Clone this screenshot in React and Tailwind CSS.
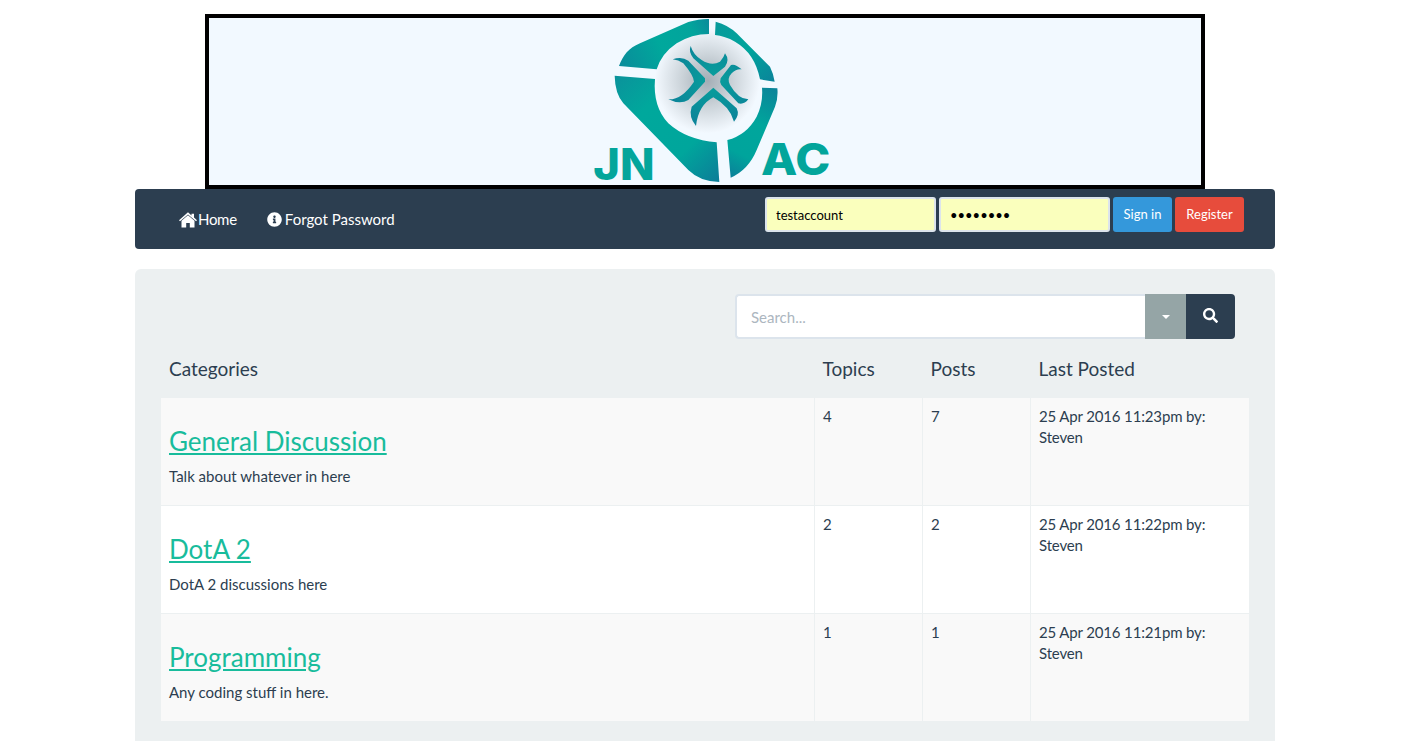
import React from "react";
import { FaInfoCircle, FaSearch } from "react-icons/fa";

function HomeIcon() {
  return (
    <svg width="18" height="16" viewBox="0 0 18 16" fill="currentColor" className="mb-[1px] shrink-0">
      <path d="M9 0.3 L12.5 3.4 V1.8 H15 V5.6 L18 8.3 L17 9.2 L9 2.4 L1 9.2 L0 8.3 Z" />
      <path d="M9 3.2 L15.5 8.8 V15.6 H10.8 V11 H7.2 V15.6 H2.5 V8.8 Z" />
    </svg>
  );
}

function Logo() {
  return (
    <svg width="300" height="167" viewBox="0 24 900 501" className="block shrink-0 overflow-visible">
      <defs>
        <linearGradient id="a" gradientUnits="userSpaceOnUse" x1="180" y1="170" x2="450" y2="30">
          <stop offset="0" stopColor="#0a8c9a" />
          <stop offset="0.45" stopColor="#00a89c" />
          <stop offset="0.8" stopColor="#02a49c" />
          <stop offset="1" stopColor="#0b8a9a" />
        </linearGradient>
        <linearGradient id="b" gradientUnits="userSpaceOnUse" x1="470" y1="40" x2="640" y2="215">
          <stop offset="0" stopColor="#079a9b" />
          <stop offset="0.5" stopColor="#00a59c" />
          <stop offset="1" stopColor="#0b849a" />
        </linearGradient>
        <linearGradient id="c" gradientUnits="userSpaceOnUse" x1="170" y1="200" x2="470" y2="510">
          <stop offset="0" stopColor="#0a939b" />
          <stop offset="0.3" stopColor="#00a89c" />
          <stop offset="0.7" stopColor="#00a69c" />
          <stop offset="1" stopColor="#0b7f98" />
        </linearGradient>
        <linearGradient id="d" gradientUnits="userSpaceOnUse" x1="650" y1="235" x2="510" y2="500">
          <stop offset="0" stopColor="#0b8399" />
          <stop offset="0.4" stopColor="#00a69c" />
          <stop offset="0.75" stopColor="#00a49c" />
          <stop offset="1" stopColor="#0b8099" />
        </linearGradient>
        <radialGradient id="x" gradientUnits="userSpaceOnUse" cx="458" cy="215" r="135">
          <stop offset="0" stopColor="#08a09c" />
          <stop offset="1" stopColor="#0b8499" />
        </radialGradient>
        <radialGradient id="g" gradientUnits="userSpaceOnUse" cx="442" cy="212" r="158">
          <stop offset="0" stopColor="#a3adb5" />
          <stop offset="0.5" stopColor="#ccd4da" />
          <stop offset="1" stopColor="#f3f9ff" />
        </radialGradient>
      </defs>
      <circle cx="442" cy="212" r="158" fill="url(#g)" />
      <path fill="url(#a)" d="M177 168 C190 135 205 115 240 100 L385 36 Q420 26 447 27 L447 72 Q395 72 350 100 Q305 130 290 178 Z" />
      <path fill="url(#b)" d="M467 35 Q505 45 530 70 L630 170 Q640 190 644 215 L600 208 Q585 130 525 95 Q495 78 465 75 Z" />
      <path fill="url(#c)" d="M164 197 L285 207 Q278 290 325 340 Q380 390 470 397 L478 516 Q420 515 385 480 L190 280 Q165 250 164 197 Z" />
      <path fill="url(#d)" d="M606 233 L652 235 Q655 265 645 290 L590 420 Q565 480 512 503 L502 390 Q560 375 590 320 Q610 280 606 233 Z" />
      <path fill="url(#x)" d="M392 108 Q400 135 425 150 Q455 170 480 155 Q492 142 495 130 Q510 150 495 170 L460 198 L400 145 Q385 125 392 108 Z" />
      <path fill="url(#x)" d="M545 178 Q525 160 513 165 L482 205 Q478 215 484 225 L535 280 Q552 285 565 268 Q535 268 510 225 Q500 205 515 190 Q530 175 545 178 Z" />
      <path fill="url(#x)" d="M460 233 L530 295 Q540 315 522 335 Q510 290 460 262 Q415 285 408 348 Q385 320 395 290 Z" />
      <path fill="url(#x)" d="M338 148 Q365 138 385 152 L435 205 L435 215 L385 270 Q360 285 325 268 Q365 270 402 215 Q400 195 370 160 Q355 150 338 148 Z" />
      <text x="100" y="511" textLength="184" lengthAdjust="spacingAndGlyphs" fontFamily="Inter, sans-serif" fontWeight="800" fontSize="132" fill="#03a59b">JN</text>
      <text x="603" y="495" textLength="208" lengthAdjust="spacingAndGlyphs" fontFamily="Inter, sans-serif" fontWeight="800" fontSize="132" fill="#03a59b">AC</text>
    </svg>
  );
}

const rows = [
  { t: "General Discussion", d: "Talk about whatever in here", a: 4, b: 7, l: "25 Apr 2016 11:23pm by: Steven" },
  { t: "DotA 2", d: "DotA 2 discussions here", a: 2, b: 2, l: "25 Apr 2016 11:22pm by: Steven" },
  { t: "Programming", d: "Any coding stuff in here.", a: 1, b: 1, l: "25 Apr 2016 11:21pm by: Steven" },
];

export default function App() {
  return (
    <div className="w-[1410px] mx-auto pt-[14px] font-['Lato',sans-serif] text-[15px] leading-[21.4px] text-[#2c3e50] bg-white">
      <div className="w-[1000px] h-[175px] mx-auto border-4 border-black bg-[#f2f9ff] flex justify-center pl-[10px]">
        <Logo />
      </div>
      <div className="w-[1140px] mx-auto">
        <nav className="h-[60px] bg-[#2c3e50] rounded-[4px] flex items-start justify-between pl-[44px] pr-[31px] pt-[8px] text-white">
          <div className="flex items-center h-[46px] gap-[30px]">
            <a className="flex items-center gap-[1px] tracking-[-0.3px]">
              <HomeIcon />
              <span>Home</span>
            </a>
            <a className="flex items-center gap-[3px]">
              <FaInfoCircle className="w-[15px] h-[15px] mb-[2px]" />
              <span>Forgot Password</span>
            </a>
          </div>
          <form className="flex gap-[3px] text-[13px]">
            <input readOnly value="testaccount" className="w-[171px] h-[35px] px-[9px] bg-[#faffbd] border-2 border-[#dce4ec] rounded-[3px] text-black outline-none" />
            <input readOnly type="password" value="testacct" className="w-[171px] h-[35px] px-[9px] bg-[#faffbd] border-2 border-[#dce4ec] rounded-[3px] text-black outline-none" />
            <button type="button" className="w-[59px] h-[35px] bg-[#3498db] rounded-[3px] text-white">Sign in</button>
            <button type="button" className="w-[69px] h-[35px] bg-[#e74c3c] rounded-[3px] text-white">Register</button>
          </form>
        </nav>
        <main className="mt-[20px] bg-[#ecf0f1] rounded-[6px] px-[26px] pt-[25px] pb-[26px]">
          <div className="flex justify-end mr-[14px]">
            <div className="flex w-[500px] h-[45px]">
              <input placeholder="Search..." className="w-[410px] h-[45px] px-[14px] bg-white border-2 border-[#dce4ec] border-r-0 rounded-l-[4px] outline-none placeholder:text-[#acb6c0]" />
              <button type="button" className="w-[41px] bg-[#95a5a6] flex items-center justify-center">
                <span className="w-0 h-0 border-x-4 border-x-transparent border-t-4 border-t-white" />
              </button>
              <button type="button" className="w-[49px] bg-[#2c3e50] rounded-r-[4px] flex items-center justify-center text-white">
                <FaSearch className="w-[15px] h-[15px] mb-[3px]" />
              </button>
            </div>
          </div>
          <table className="w-[1088px] table-fixed border-separate border-spacing-0">
            <colgroup>
              <col className="w-[653px]" />
              <col className="w-[108px]" />
              <col className="w-[108px]" />
              <col className="w-[219px]" />
            </colgroup>
            <thead>
              <tr className="text-[19px] text-left leading-[21px]">
                <th className="font-normal px-[8px] pt-[19px] pb-[19px]">Categories</th>
                <th className="font-normal pl-[7.5px] pr-[8px] pt-[19px] pb-[19px] border-l border-transparent">Topics</th>
                <th className="font-normal pl-[7.5px] pr-[8px] pt-[19px] pb-[19px] border-l border-transparent">Posts</th>
                <th className="font-normal pl-[7.5px] pr-[8px] pt-[19px] pb-[19px] border-l border-transparent">Last Posted</th>
              </tr>
            </thead>
            <tbody>
              {rows.map((r, i) => (
                <tr key={r.t} className={i % 2 === 0 ? "bg-[#f9f9f9]" : "bg-white"}>
                  <td className={"align-top p-[8px] " + (i ? "border-t border-[#ecf0f1]" : "")}>
                    <h3 className="mt-[21px] mb-[10px] text-[26px] leading-[28.6px] text-[#18bc9c] underline">{r.t}</h3>
                    <p className="mb-[10px]">{r.d}</p>
                  </td>
                  <td className={"align-top p-[8px] border-l border-[#ecf0f1] " + (i ? "border-t" : "")}>{r.a}</td>
                  <td className={"align-top p-[8px] border-l border-[#ecf0f1] " + (i ? "border-t" : "")}>{r.b}</td>
                  <td className={"align-top p-[8px] border-l border-[#ecf0f1] tracking-[-0.15px] " + (i ? "border-t" : "")}>{r.l}</td>
                </tr>
              ))}
            </tbody>
          </table>
        </main>
      </div>
    </div>
  );
}
